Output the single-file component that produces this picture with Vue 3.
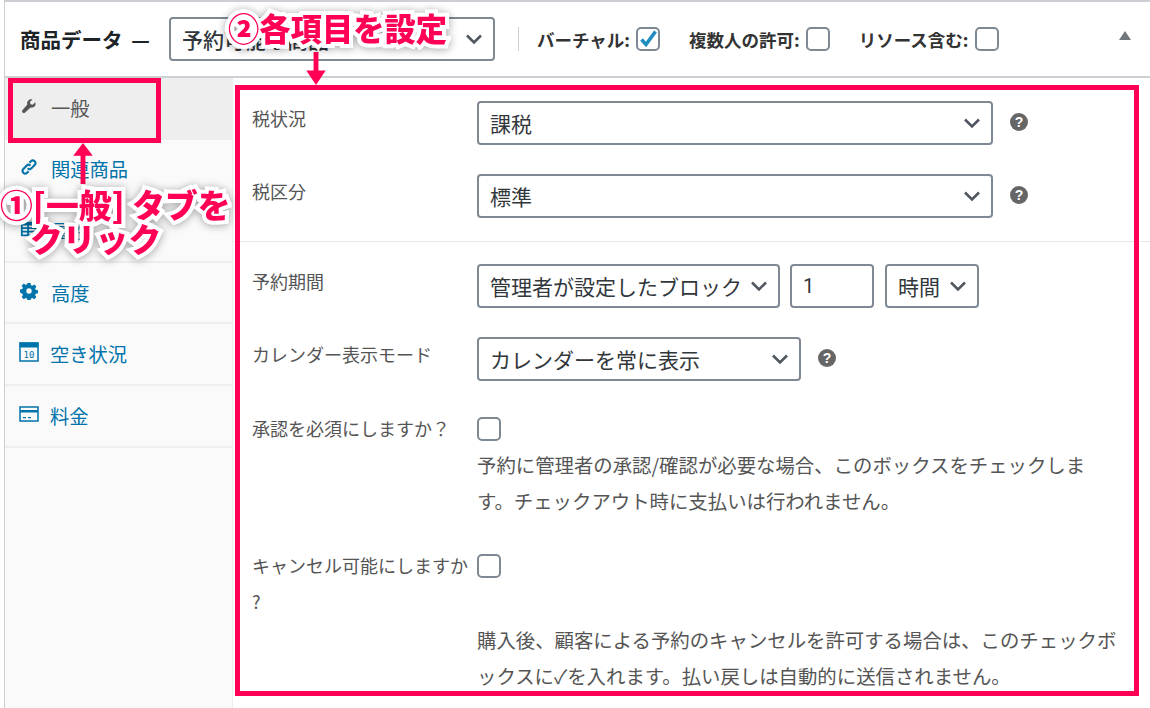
<script setup>
const tabs = [
  { key: 'general', label: '一般', active: true },
  { key: 'linked', label: '関連商品' },
  { key: 'attr', label: '属性' },
  { key: 'advanced', label: '高度' },
  { key: 'avail', label: '空き状況' },
  { key: 'cost', label: '料金' },
]
</script>

<template>
  <div class="page">
    <div class="box">
      <header class="head">
        <h2 class="head-title">商品データ —</h2>
        <div class="select head-select">
          <span>予約可能な商品</span>
          <svg class="chev" viewBox="0 0 20 12"><path d="M3 2.500l7 7 7-7" /></svg>
        </div>
        <span class="head-sep"></span>
        <label class="opt">バーチャル:
          <span class="check">
            <svg viewBox="0 0 20 20"><path d="M3.500 10.500l4.500 5L17.500 2.500" /></svg>
          </span>
        </label>
        <label class="opt opt-b">複数人の許可:<span class="check"></span></label>
        <label class="opt opt-c">リソース含む:<span class="check"></span></label>
        <span class="tri"></span>
      </header>

      <div class="body">
        <nav class="side">
          <a v-for="t in tabs" :key="t.key" :class="['tab', t.active && 'tab--on']">
            <svg v-if="t.key === 'general'" class="ico" viewBox="0 0 20 20">
              <path d="M17.800 5.300l-3.200 3.100-2.700-.7-.7-2.700 3.100-3.100c-1.800-.6-3.900-.2-5.200 1.200-1.300 1.300-1.700 3.200-1.200 4.900L2 14.900c-.9.900-.9 2.200 0 3.100.9.900 2.200.9 3.100 0l6.900-6.100c1.700.5 3.600.1 4.900-1.200 1.300-1.400 1.600-3.500.9-5.400z" />
            </svg>
            <svg v-else-if="t.key === 'linked'" class="ico" viewBox="0 0 20 20">
              <path class="line" d="M8.500 11.500c1.200 1.200 3 1.200 4.200 0l3.600-3.600c1.200-1.200 1.200-3 0-4.200s-3-1.200-4.200 0l-1.600 1.600" />
              <path class="line" d="M11.500 8.500c-1.200-1.200-3-1.200-4.200 0l-3.600 3.600c-1.200 1.200-1.200 3 0 4.200s3 1.200 4.200 0l1.600-1.600" />
            </svg>
            <svg v-else-if="t.key === 'attr'" class="ico" viewBox="0 0 20 20">
              <path d="M1 2h18v16H1z" />
              <path class="cut" d="M3 6h5v2H3zM10 6h7v2h-7zM3 10h5v2H3zM10 10h7v2h-7zM3 14h5v2H3zM10 14h7v2h-7z" />
            </svg>
            <svg v-else-if="t.key === 'advanced'" class="ico" viewBox="0 0 20 20">
              <path fill-rule="evenodd" d="M8.300 1h3.400l.5 2.500 1.500.6 2.100-1.400 2.400 2.400-1.400 2.100.6 1.500 2.600.5v3.400l-2.600.5-.6 1.500 1.400 2.100-2.400 2.400-2.100-1.400-1.500.6-.5 2.600H8.300l-.5-2.600-1.500-.6-2.100 1.400-2.400-2.400 1.400-2.100-.6-1.500L0 11.700V8.300l2.600-.5.6-1.500-1.400-2.100 2.400-2.400 2.100 1.400 1.500-.6zM10 7a3 3 0 1 0 0 6 3 3 0 0 0 0-6z" />
            </svg>
            <svg v-else-if="t.key === 'avail'" class="ico ico-lg" viewBox="0 0 20 20">
              <path class="frame" d="M1 1h18v18H1z" />
              <path d="M.5 .5h19v5H.5z" />
              <text x="10" y="15.500" text-anchor="middle" class="ico-num">10</text>
            </svg>
            <svg v-else class="ico ico-lg" viewBox="0 0 20 20">
              <path class="frame" d="M1 3h18v14H1z" />
              <path d="M1 6h18v2.500H1zM4 13h3v1.300H4zM9 13h3v1.300H9z" />
            </svg>
            <span>{{ t.label }}</span>
          </a>
        </nav>

        <main class="main">
          <section class="group">
            <div class="row">
              <label class="lab">税状況</label>
              <div class="fields">
                <div class="select w-full"><span>課税</span><svg class="chev" viewBox="0 0 20 12"><path d="M3 2.500l7 7 7-7" /></svg></div>
                <span class="help">?</span>
              </div>
            </div>
            <div class="row">
              <label class="lab">税区分</label>
              <div class="fields">
                <div class="select w-full"><span>標準</span><svg class="chev" viewBox="0 0 20 12"><path d="M3 2.500l7 7 7-7" /></svg></div>
                <span class="help">?</span>
              </div>
            </div>
          </section>

          <section class="group group-2">
            <div class="row">
              <label class="lab">予約期間</label>
              <div class="fields fields-tight">
                <div class="select w-block"><span>管理者が設定したブロック</span><svg class="chev" viewBox="0 0 20 12"><path d="M3 2.500l7 7 7-7" /></svg></div>
                <div class="select w-num"><span class="num">1</span></div>
                <div class="select w-unit"><span>時間</span><svg class="chev" viewBox="0 0 20 12"><path d="M3 2.500l7 7 7-7" /></svg></div>
              </div>
            </div>
            <div class="row">
              <label class="lab">カレンダー表示モード</label>
              <div class="fields">
                <div class="select w-cal"><span>カレンダーを常に表示</span><svg class="chev" viewBox="0 0 20 12"><path d="M3 2.500l7 7 7-7" /></svg></div>
                <span class="help help-cal">?</span>
              </div>
            </div>
            <div class="row row-check">
              <label class="lab">承認を必須にしますか？</label>
              <div><span class="check check-row"></span></div>
              <p class="desc">予約に管理者の承認/確認が必要な場合、このボックスをチェックします。チェックアウト時に支払いは行われません。</p>
            </div>
            <div class="row row-check">
              <label class="lab">キャンセル可能にしますか ?</label>
              <div><span class="check check-row"></span></div>
              <p class="desc">購入後、顧客による予約のキャンセルを許可する場合は、このチェックボックスに✓を入れます。払い戻しは自動的に送信されません。</p>
            </div>
          </section>
        </main>
      </div>
    </div>

    <!-- annotations on top of the screenshot -->
    <div class="mark mark-tab"></div>
    <div class="mark mark-main"></div>
    <svg class="arrow arrow-up" viewBox="0 0 24 44"><path d="M12 1l10 13h-7.500v29h-5V14H2z" /></svg>
    <svg class="arrow arrow-down" viewBox="0 0 24 36"><path d="M12 35L2 20h7.500V1h5v19H22z" /></svg>
    <div class="note note-top">②各項目を設定</div>
    <div class="note note-left">①[一般] タブを<br><span class="note-indent">クリック</span></div>
  </div>
</template>

<style>
html, body { margin: 0; background: #fff; }
</style>

<style scoped>
.page {
  position: relative;
  width: 1150px;
  height: 708px;
  overflow: hidden;
  background: #fff;
  font-family: "Noto Sans CJK JP", "Noto Sans", sans-serif;
  color: #555;
}

.box {
  margin-left: 4px;
  height: 706px;
  border-top: 2px solid #ccd0d4;
  border-left: 1px solid #ccd0d4;
  display: flex;
  flex-direction: column;
}

/* header */
.head {
  height: 74px;
  flex-shrink: 0;
  display: flex;
  align-items: center;
  padding-left: 15px;
  border-bottom: 2px solid #ccd0d4;
  box-sizing: content-box;
}

.head-title {
  margin: 0 17px 0 0;
  width: 132px;
  font-size: 20.500px;
  font-weight: 700;
  word-spacing: 4px;
  color: #1d2327;
  white-space: nowrap;
}

.select {
  height: 44px;
  box-sizing: border-box;
  border: 2px solid #7e8993;
  border-radius: 4px;
  background: #fff;
  display: flex;
  align-items: center;
  justify-content: space-between;
  padding: 0 12px 0 11px;
  font-size: 21px;
  color: #32373c;
  white-space: nowrap;
  flex-shrink: 0;
}

.head-select { width: 326px; font-weight: 500; }

.chev {
  width: 20px;
  height: 12px;
  flex-shrink: 0;
  margin-right: -3px;
}
.chev path {
  fill: none;
  stroke: #50575e;
  stroke-width: 2.600;
}

.head-sep {
  width: 1px;
  height: 24px;
  background: #ccd0d4;
  margin: 0 18px 0 23px;
}

.opt {
  display: flex;
  align-items: center;
  gap: 6px;
  font-size: 17.500px;
  font-weight: 700;
  color: #333;
  white-space: nowrap;
}
.opt-b { margin-left: 29px; }
.opt-c { margin-left: 29px; }

.check {
  display: block;
  width: 24px;
  height: 24px;
  box-sizing: border-box;
  border: 2px solid #7e8993;
  border-radius: 5px;
  background: #fff;
  flex-shrink: 0;
}
.check svg {
  display: block;
  width: 20px;
  height: 20px;
}
.check path {
  fill: none;
  stroke: #1e8cbe;
  stroke-width: 3.600;
}

.tri {
  margin: -8px 19px 0 auto;
  width: 0;
  height: 0;
  border-left: 6px solid transparent;
  border-right: 6px solid transparent;
  border-bottom: 9px solid #72777c;
}

/* body */
.body {
  flex: 1;
  display: flex;
  min-height: 0;
}

.side {
  width: 227px;
  flex-shrink: 0;
  background: #fafafa;
  border-right: 1px solid #eee;
  display: flex;
  flex-direction: column;
}

.tab {
  height: 61.600px;
  box-sizing: border-box;
  flex-shrink: 0;
  display: flex;
  align-items: center;
  padding-left: 15px;
  gap: 13px;
  border-bottom: 2px solid #eee;
  font-size: 19.300px;
  color: #0073aa;
}
.tab--on {
  background: #eee;
  color: #555;
}

.ico {
  width: 18px;
  height: 18px;
  margin-top: -4px;
  fill: #0073aa;
  flex-shrink: 0;
}
.ico-lg { width: 20px; height: 20px; margin-right: -2px; margin-left: -1px; }
.tab--on .ico { fill: #555; width: 16px; height: 16px; margin-left: 1px; margin-right: 1px; }

.line { fill: none; stroke: #0073aa; stroke-width: 2.400; }
.cut { fill: #fafafa; }
.frame { fill: #fafafa; stroke: #0073aa; stroke-width: 1.500; }
.ico-num { font-size: 9px; font-family: "DejaVu Sans Mono", monospace; fill: #0073aa; }

.main {
  flex: 1;
  min-width: 0;
  background: #fff;
}

.group { padding: 23px 0 23px; }
.group-2 { border-top: 1px solid #e9e9e9; padding-top: 22px; }

.row {
  display: grid;
  grid-template-columns: 225px 1fr;
  padding-left: 19px;
  margin-bottom: 29px;
}
.group .row:last-child { margin-bottom: 0; }

.row-check { margin: 30px 0 0; }

.lab {
  margin: -1px 0 1px;
  font-size: 18px;
  line-height: 36px;
  color: #555;
}

.fields {
  display: flex;
  align-items: center;
}
.fields-tight { gap: 10px; }

.w-full { width: 516px; }
.w-block { width: 303px; }
.w-num { width: 84px; margin-right: 1px; }
.w-unit { width: 94px; }
.w-cal { width: 324px; }
.num { font-family: "Roboto", sans-serif; font-size: 20px; }

.help {
  width: 18px;
  height: 18px;
  margin: -2px 0 0 17px;
  border-radius: 50%;
  background: #666;
  color: #fff;
  font-size: 14px;
  font-weight: 900;
  line-height: 18px;
  text-align: center;
  font-family: "Liberation Sans", sans-serif;
}
.help-cal { margin-left: 17px; }

.check-row { margin-top: 6px; }

.desc {
  grid-column: 2;
  margin: 0;
  width: 643px;
  font-size: 19.400px;
  line-height: 35.500px;
  color: #555;
}
.row-check:last-child .desc { margin-top: 2px; }

/* annotations */
.mark {
  position: absolute;
  box-sizing: border-box;
  border: 5px solid #ff0055;
}
.mark-tab { left: 8px; top: 78px; width: 153px; height: 65px; }
.mark-main { left: 235px; top: 85px; width: 904px; height: 611px; }

.arrow {
  position: absolute;
  fill: #ff0055;
}
.arrow-up { left: 71px; top: 142px; width: 24px; height: 43px; }
.arrow-down { left: 304px; top: 51px; width: 24px; height: 35px; }

.note {
  position: absolute;
  font-weight: 900;
  color: #ff0055;
  white-space: nowrap;
  -webkit-text-stroke: 8px #fff;
  paint-order: stroke fill;
  filter: drop-shadow(0 1px 4px rgba(0, 0, 0, 0.35));
}
.note-top { left: 228px; top: 10px; font-size: 31.300px; line-height: 36px; }
.note-left { left: 0; top: 187px; font-size: 32.800px; line-height: 34px; }
.note-indent { margin-left: 30px; }
</style>
